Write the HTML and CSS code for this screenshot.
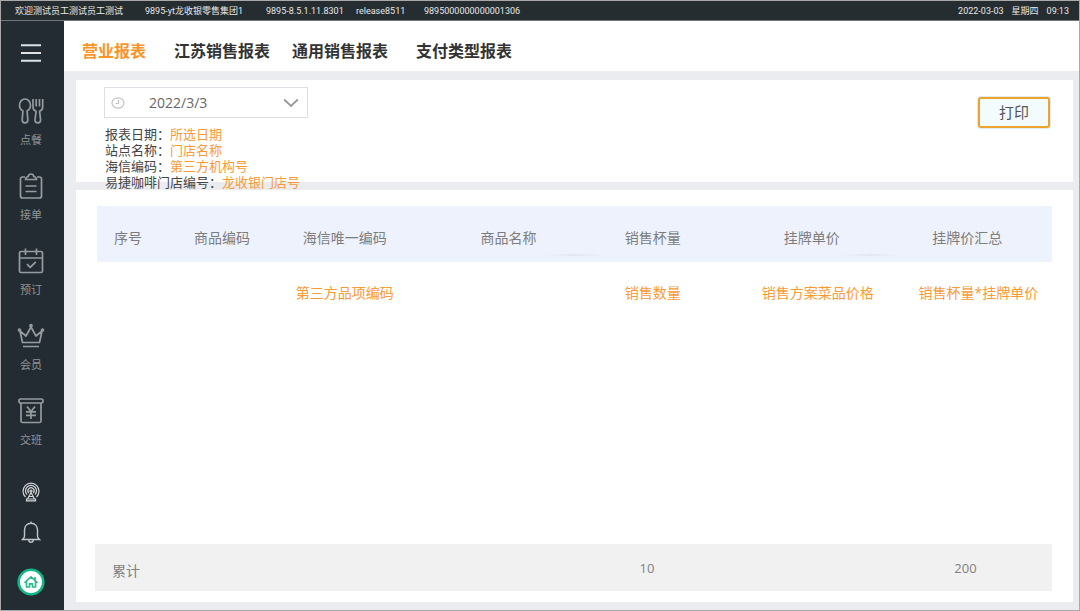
FILE: index.html
```html
<!DOCTYPE html>
<html lang="zh-CN">
<head>
<meta charset="utf-8">
<meta name="viewport" content="width=device-width, initial-scale=1">
<title>营业报表</title>
<link rel="stylesheet" href="styles.css">
</head>
<body>
<div class="app">
  <header class="status">
    <span class="status-user">欢迎测试员工测试员工测试</span>
    <span class="status-group">9895-yt龙收银零售集团1</span>
    <span class="status-version">9895-8.5.1.11.8301</span>
    <span class="status-release">release8511</span>
    <span class="status-id">9895000000000001306</span>
    <time class="status-time"><span>2022-03-03</span><span>星期四</span><span>09:13</span></time>
  </header>

  <aside class="sidebar">
    <button class="menu" type="button" aria-label="菜单">
      <svg width="22" height="20" viewBox="0 0 22 20"><path d="M1 2.200h20M1 10h20M1 17.800h20" stroke="#dfe1e2" stroke-width="2"/></svg>
    </button>
    <nav class="side-nav">
      <button class="side-item" type="button">
        <svg class="icon" viewBox="0 0 28 28"><path d="M8 2C4.800 2 2.500 4.800 2.500 8.200c0 2.700 1.300 4.600 3.400 5.700L5.200 23a2.700 2.700 0 0 0 5.600 0l-.7-9.100c2.100-1.100 3.400-3 3.400-5.700C13.500 4.800 11.200 2 8 2z"/><path d="M16 2v8c0 2.300 1 3.500 3.100 4.300L18 23a2.700 2.700 0 0 0 5.600 0l-1-8.700c2.100-.8 3.100-2 3.100-4.300V2M19.200 2v7.500M22.500 2v7.500"/></svg>
        <span>点餐</span>
      </button>
      <button class="side-item" type="button">
        <svg class="icon" viewBox="0 0 28 28"><path d="M8 5H5.500A2 2 0 0 0 3.500 7v17a2 2 0 0 0 2 2h17a2 2 0 0 0 2-2V7a2 2 0 0 0-2-2H20M8.500 7.500h11c-.2-2-1.400-2.800-2.700-3C16.500 2.800 15.500 2 14 2s-2.500.8-2.800 2.500c-1.300.2-2.500 1-2.700 3zM8.500 14h11M8.500 19.500h11"/></svg>
        <span>接单</span>
      </button>
      <button class="side-item" type="button">
        <svg class="icon" viewBox="0 0 28 28"><rect x="2.500" y="4.500" width="23" height="21" rx="1.500"/><path d="M2.500 11h23M8.500 1.500V8M19.500 1.500V8M10 17.200l3.200 3.200 5.600-5.600"/></svg>
        <span>预订</span>
      </button>
      <button class="side-item" type="button">
        <svg class="icon" viewBox="0 0 28 28"><path d="M5.500 20.500L3 9l6 5 5-9 5 9 6-5-2.500 11.500zM6 24.500h16"/><circle cx="2.500" cy="8" r="1"/><circle cx="14" cy="3.500" r="1"/><circle cx="25.500" cy="8" r="1"/></svg>
        <span>会员</span>
      </button>
      <button class="side-item" type="button">
        <svg class="icon" viewBox="0 0 28 28"><rect x="2" y="2" width="24" height="4" rx="1.500"/><path d="M4 6v18a1.500 1.500 0 0 0 1.500 1.500h17A1.500 1.500 0 0 0 24 24V6M10 9.500l4 5 4-5M14 14.500V22M9 14.800h10M9 18.300h10"/></svg>
        <span>交班</span>
      </button>
    </nav>
    <div class="side-tools">
      <button class="tool" type="button" aria-label="信号">
        <svg width="20" height="20" viewBox="0 0 20 20" fill="none" stroke="#d4d7d9" stroke-width="1.200"><path d="M4.500 15A8 8 0 1 1 15.500 15M6 12.700A5.500 5.500 0 1 1 14 12.700M7.700 11a3.100 3.100 0 1 1 4.600 0"/><circle cx="10" cy="9" r="1"/><path d="M10 10.500L6.500 17M10 10.500l3.500 6.500M8 14.500h4M5.500 17h9v1.800h-9z"/></svg>
      </button>
      <button class="tool" type="button" aria-label="通知">
        <svg width="22" height="24" viewBox="0 0 22 24" fill="none" stroke="#c0c4c6" stroke-width="1.400"><path d="M11 3.200c-3.900 0-6.500 2.900-6.500 6.700v6.300c0 1.300-.9 2.200-2 3.300h17c-1.100-1.100-2-2-2-3.300V9.900c0-3.800-2.600-6.700-6.500-6.700zM11 3.200V1.500M8.800 20a2.200 2.200 0 0 0 4.400 0"/></svg>
      </button>
      <button class="tool" type="button" aria-label="首页">
        <svg width="28" height="28" viewBox="0 0 28 28"><circle cx="14" cy="14" r="12.300" fill="#fff" stroke="#12b886" stroke-width="2.600"/><path d="M7.500 14.800L14 8.800l6.500 6M9.500 13.500V19h3v-3.200h3V19h3v-5.500M18 9v3" fill="none" stroke="#2fb98f" stroke-width="1.700"/></svg>
      </button>
    </div>
  </aside>

  <main class="main">
    <nav class="tabs">
      <a class="tab tab-active" href="#">营业报表</a>
      <a class="tab tab-wide" href="#">江苏销售报表</a>
      <a class="tab" href="#">通用销售报表</a>
      <a class="tab tab-wide" href="#">支付类型报表</a>
    </nav>
    <div class="content">
      <section class="card filter">
        <div class="filter-fields">
          <div class="date">
            <svg width="14" height="12" viewBox="0 0 14 12" fill="none" stroke="#c4c4c4" stroke-width="1.200"><ellipse cx="7" cy="6" rx="6" ry="5.200"/><path d="M7.500 3v3.500H4.500"/></svg>
            <select class="date-select" aria-label="报表日期"><option>2022/3/3</option></select>
            <svg class="date-arrow" width="16" height="10" viewBox="0 0 16 10" fill="none" stroke="#999" stroke-width="1.800"><path d="M1.200 1.500L8 8l6.800-6.500"/></svg>
          </div>
          <dl class="meta">
            <div><dt>报表日期：</dt><dd>所选日期</dd></div>
            <div><dt>站点名称：</dt><dd>门店名称</dd></div>
            <div><dt>海信编码：</dt><dd>第三方机构号</dd></div>
            <div><dt>易捷咖啡门店编号：</dt><dd>龙收银门店号</dd></div>
          </dl>
        </div>
        <button class="print" type="button">打印</button>
      </section>

      <section class="card report">
        <table class="table">
          <colgroup><col class="c1"><col class="c2"><col class="c3"><col class="c4"><col class="c5"><col class="c6"><col class="c7"></colgroup>
          <thead>
            <tr><th class="cell-index">序号</th><th>商品编码</th><th>海信唯一编码</th><th>商品名称</th><th>销售杯量</th><th>挂牌单价</th><th class="cell-total">挂牌价汇总</th></tr>
          </thead>
          <tbody>
            <tr><td></td><td></td><td>第三方品项编码</td><td></td><td>销售数量</td><td class="cell-price">销售方案菜品价格</td><td class="cell-amount">销售杯量*挂牌单价</td></tr>
          </tbody>
        </table>
        <div class="summary">
          <span class="summary-label">累计</span>
          <span class="summary-count">10</span>
          <span class="summary-sum">200</span>
        </div>
      </section>
    </div>
  </main>
</div>
</body>
</html>
```
FILE: styles.css
```css
* {
  box-sizing: border-box;
}

body {
  margin: 0;
  font-family: "Open Sans", "Noto Sans CJK SC", sans-serif;
  font-size: 14px;
  color: #333;
}

button,
select {
  margin: 0;
  padding: 0;
  border: 0;
  background: none;
  font: inherit;
  color: inherit;
}

svg {
  display: block;
}

.app {
  min-height: 100vh;
  display: grid;
  grid-template: 20px 1fr / 63px 1fr;
  border: 1px solid #a9a9a9;
  background: #ebecf0;
}

.status {
  grid-column: 1 / -1;
  display: flex;
  align-items: center;
  padding: 0 10px 0 14px;
  background: #262d30;
  border-bottom: 1px solid #71777a;
  color: #e6e8e9;
  font-family: Roboto, "Noto Sans CJK SC", sans-serif;
  font-size: 9px;
  line-height: 18px;
  white-space: nowrap;
}

.status-user {
  width: 130px;
}

.status-group {
  width: 121px;
}

.status-version {
  width: 90px;
}

.status-release {
  width: 68px;
}

.status-time {
  display: flex;
  gap: 8px;
  margin-left: auto;
}

.sidebar {
  display: flex;
  flex-direction: column;
  align-items: center;
  padding: 22px 3px 14px 0;
  background: #242c33;
}

.side-nav {
  display: flex;
  flex-direction: column;
  margin-top: 33px;
}

.side-item {
  display: flex;
  flex-direction: column;
  align-items: center;
  gap: 7px;
  height: 75px;
  padding-top: 1px;
  flex: none;
  font-size: 11px;
  line-height: 16px;
  color: #8f9497;
}

.icon {
  width: 28px;
  height: 28px;
  fill: none;
  stroke: #969b9e;
  stroke-width: 1.7;
  stroke-linejoin: round;
}

.side-tools {
  display: flex;
  flex-direction: column;
  align-items: center;
  margin-top: auto;
}

.tool + .tool {
  margin-top: 18px;
}

.tool:last-child {
  margin-top: 24px;
}

.main {
  display: flex;
  flex-direction: column;
  min-width: 0;
}

.tabs {
  display: flex;
  align-items: center;
  gap: 22px;
  height: 50px;
  padding: 10px 18px 0;
  background: #fff;
}

.tab {
  color: #333;
  font-size: 16px;
  font-weight: 700;
  line-height: 24px;
  text-decoration: none;
}

.tab-wide {
  margin-left: 6px;
}

.tab-active {
  color: #fa9426;
}

.content {
  flex: 1;
  display: flex;
  flex-direction: column;
  gap: 8px;
  padding: 9px 6px 8px 12px;
}

.card {
  background: #fff;
}

.filter {
  position: relative;
  z-index: 1;
  display: flex;
  justify-content: space-between;
  align-items: flex-start;
  height: 102px;
  padding: 7px 23px 0 28px;
}

.date {
  display: grid;
  grid-template-columns: 14px 1fr 16px;
  align-items: center;
  width: 204px;
  height: 31px;
  padding: 0 8px 0 6px;
  border: 1px solid #dcdfe4;
}

.date svg {
  grid-row: 1;
  grid-column: 1;
}

.date .date-arrow {
  grid-column: 3;
  pointer-events: none;
}

.date-select {
  grid-row: 1;
  grid-column: 1 / -1;
  appearance: none;
  height: 29px;
  padding-left: 38px;
  color: #666;
}

.meta {
  margin: 8px 0 0 1px;
  font-size: 13px;
  line-height: 16px;
  white-space: nowrap;
}

.meta div {
  display: flex;
}

.meta dt {
  color: #444;
}

.meta dd {
  margin: 0;
  color: #fa9a34;
}

.print {
  width: 72px;
  height: 31px;
  margin-top: 10px;
  border: 2px solid #eba42c;
  border-radius: 3px;
  background: #f2fbfe;
  box-shadow: 0 0 0 1px #dfebf1;
  font-size: 15px;
  line-height: 20px;
  padding-bottom: 2px;
  color: #555;
}

.report {
  flex: 1;
  display: flex;
  flex-direction: column;
  justify-content: space-between;
  padding: 16px 21px 11px 19px;
}

.table {
  table-layout: fixed;
  margin-left: 2px;
  border-collapse: collapse;
  line-height: 20px;
  white-space: nowrap;
}

.c1 { width: 8.6%; }
.c2 { width: 9%; }
.c3 { width: 16.7%; }
.c4 { width: 17.6%; }
.c5 { width: 12.6%; }
.c6 { width: 20.7%; }
.c7 { width: 14.8%; }

.table thead tr {
  background:
    linear-gradient(90deg, transparent, #e2e6f3, transparent) 50% 48px / 60px 2px no-repeat,
    linear-gradient(90deg, transparent, #e2e6f3, transparent) 83% 48px / 60px 2px no-repeat,
    #edf2fc;
}

.table th,
.table td {
  padding: 0;
  text-align: center;
}

.table th {
  height: 56px;
  padding-top: 8px;
  color: #7d7d7d;
  font-weight: 400;
}

.table td {
  height: 62px;
  color: #fa9a34;
}

.table .cell-index {
  padding-right: 20px;
}

.table .cell-total {
  padding-right: 28px;
}

.table .cell-price {
  padding-left: 12px;
}

.table .cell-amount {
  padding-right: 6px;
}

.summary {
  display: grid;
  grid-template-columns: 498fr 120fr 198fr 141fr;
  align-items: center;
  height: 47px;
  background: #f1f1f1;
  color: #808080;
  text-align: center;
}

.summary-label {
  padding: 4px 0 0 17px;
  text-align: left;
}

.summary-count {
  padding-right: 12px;
  font-size: 13px;
}

.summary-sum {
  grid-column: 4;
  padding-right: 32px;
  font-size: 13px;
}
```
